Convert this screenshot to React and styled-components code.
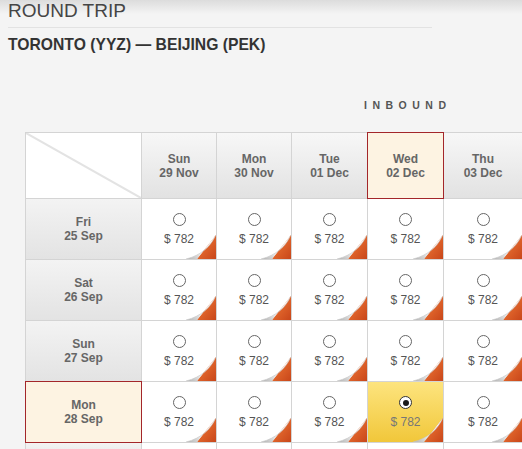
import styled, { createGlobalStyle, css } from 'styled-components';

const GlobalStyle = createGlobalStyle`
  html, body {
    margin: 0;
    padding: 0;
    background: #f4f4f4;
    overflow: hidden;
  }
  body {
    font-family: 'Liberation Sans', Arial, sans-serif;
    background: linear-gradient(to bottom, #dcdcdc 0px, #f4f4f4 14px, #f4f4f4 100%);
    min-height: 449px;
  }
`;

const Page = styled.div`
  padding: 0 0 0 8px;
`;

const Title = styled.h1`
  margin: 0;
  width: 424px;
  padding-bottom: 5px;
  border-bottom: 1px solid #e2e2e2;
  font-size: 19px;
  line-height: 22px;
  font-weight: normal;
  color: #454545;
`;

const Route = styled.h2`
  margin: 8px 0 0;
  font-size: 15.7px;
  line-height: 18px;
  font-weight: bold;
  color: #333;
`;

const Direction = styled.div`
  margin: 45px 0 0 356px;
  font-size: 10.5px;
  line-height: 12px;
  font-weight: bold;
  letter-spacing: 5.5px;
  color: #555;
`;

const Grid = styled.div`
  margin: 21px 0 0 17px;
  display: grid;
  grid-template-columns: 115px 74px 74px 75px 75px 78px;
  grid-template-rows: 65px repeat(4, 60px) 20px;
  gap: 1px;
  padding: 1px 0 0 1px;
  background: #d4d4d4;
  width: max-content;
`;

const Corner = styled.div`
  background: #fff;
  overflow: hidden;
  & svg {
    display: block;
  }
`;

const headerLook = css`
  display: flex;
  flex-direction: column;
  align-items: center;
  justify-content: center;
  font-size: 12px;
  line-height: 14px;
  font-weight: bold;
  color: #666;
  position: relative;
`;

const DateHead = styled.div`
  ${headerLook}
  ${(p) =>
    p.$active
      ? css`
          background: #fdf3e2;
          outline: 1px solid #a3262a;
          z-index: 1;
        `
      : css`
          background: linear-gradient(to bottom, #f7f7f7, #e2e2e2);
        `}
`;

const RowHead = styled.div`
  ${headerLook}
  ${(p) =>
    p.$active
      ? css`
          background: #fdf3e2;
          outline: 1px solid #a3262a;
          z-index: 1;
        `
      : css`
          background: linear-gradient(to bottom, #f3f3f3, #e3e3e3);
        `}
`;

const PriceCell = styled.div`
  position: relative;
  display: flex;
  flex-direction: column;
  align-items: center;
  padding-top: 14px;
  box-sizing: border-box;
  overflow: hidden;
  background: ${(p) =>
    p.$selected ? 'linear-gradient(to bottom, #fde47e, #f1c73a)' : '#fff'};
`;

const Radio = styled.span`
  box-sizing: border-box;
  width: 13px;
  height: 13px;
  border-radius: 50%;
  border: 1px solid ${(p) => (p.$checked ? '#333' : '#666')};
  background: #fff;
  position: relative;
  &::after {
    content: '';
    display: ${(p) => (p.$checked ? 'block' : 'none')};
    position: absolute;
    left: 2.5px;
    top: 2.5px;
    width: 6px;
    height: 6px;
    border-radius: 50%;
    background: #1a1a1a;
  }
`;

const Price = styled.span`
  margin-top: 6px;
  font-size: 12px;
  line-height: 14px;
  color: ${(p) => (p.$selected ? '#777' : '#555')};
`;

const Curl = styled.svg`
  position: absolute;
  right: 0;
  bottom: 0;
`;

const PageCurl = () => (
  <Curl width="32" height="25" viewBox="0 0 32 25">
    <defs>
      <linearGradient id="curlOrange" x1="0" y1="0" x2="1" y2="1">
        <stop offset="0" stopColor="#f5803a" />
        <stop offset="1" stopColor="#c8461a" />
      </linearGradient>
      <linearGradient id="curlFlap" x1="0" y1="1" x2="0.75" y2="0.25">
        <stop offset="0" stopColor="#b0b0b0" />
        <stop offset="0.5" stopColor="#ececec" />
        <stop offset="1" stopColor="#ffffff" />
      </linearGradient>
    </defs>
    <polygon points="32,1 32,25 13,25" fill="url(#curlOrange)" />
    <path d="M13 25 L31.5 1.5 C27 12 17 21.5 2 25 Z" fill="url(#curlFlap)" />
    <path d="M2 25 C17 21.5 27 12 31.5 1.5" fill="none" stroke="#c4c4c4" strokeWidth="0.6" />
  </Curl>
);

const dates = [
  ['Sun', '29 Nov'],
  ['Mon', '30 Nov'],
  ['Tue', '01 Dec'],
  ['Wed', '02 Dec'],
  ['Thu', '03 Dec'],
];

const outbound = [
  ['Fri', '25 Sep'],
  ['Sat', '26 Sep'],
  ['Sun', '27 Sep'],
  ['Mon', '28 Sep'],
];

const activeCol = 3;
const activeRow = 3;

export default function App() {
  return (
    <Page>
      <GlobalStyle />
      <Title>ROUND TRIP</Title>
      <Route>TORONTO (YYZ) — BEIJING (PEK)</Route>
      <Direction>INBOUND</Direction>
      <Grid>
        <Corner>
          <svg width="115" height="65" viewBox="0 0 115 65">
            <line x1="0" y1="0" x2="115" y2="65" stroke="#e3e3e3" strokeWidth="2" />
          </svg>
        </Corner>
        {dates.map(([day, date], i) => (
          <DateHead key={date} $active={i === activeCol}>
            <span>{day}</span>
            <span>{date}</span>
          </DateHead>
        ))}
        {outbound.map(([day, date], r) => (
          <Row key={date} day={day} date={date} r={r} />
        ))}
        {/* top of the next row, cut by the window */}
        <RowHead />
        {dates.map((d) => (
          <PriceCell key={d[1]} />
        ))}
      </Grid>
    </Page>
  );
}

function Row({ day, date, r }) {
  return (
    <>
      <RowHead $active={r === activeRow}>
        <span>{day}</span>
        <span>{date}</span>
      </RowHead>
      {dates.map((d, c) => {
        const selected = r === activeRow && c === activeCol;
        return (
          <PriceCell key={d[1]} $selected={selected}>
            <Radio $checked={selected} />
            <Price $selected={selected}>$ 782</Price>
            <PageCurl />
          </PriceCell>
        );
      })}
    </>
  );
}
